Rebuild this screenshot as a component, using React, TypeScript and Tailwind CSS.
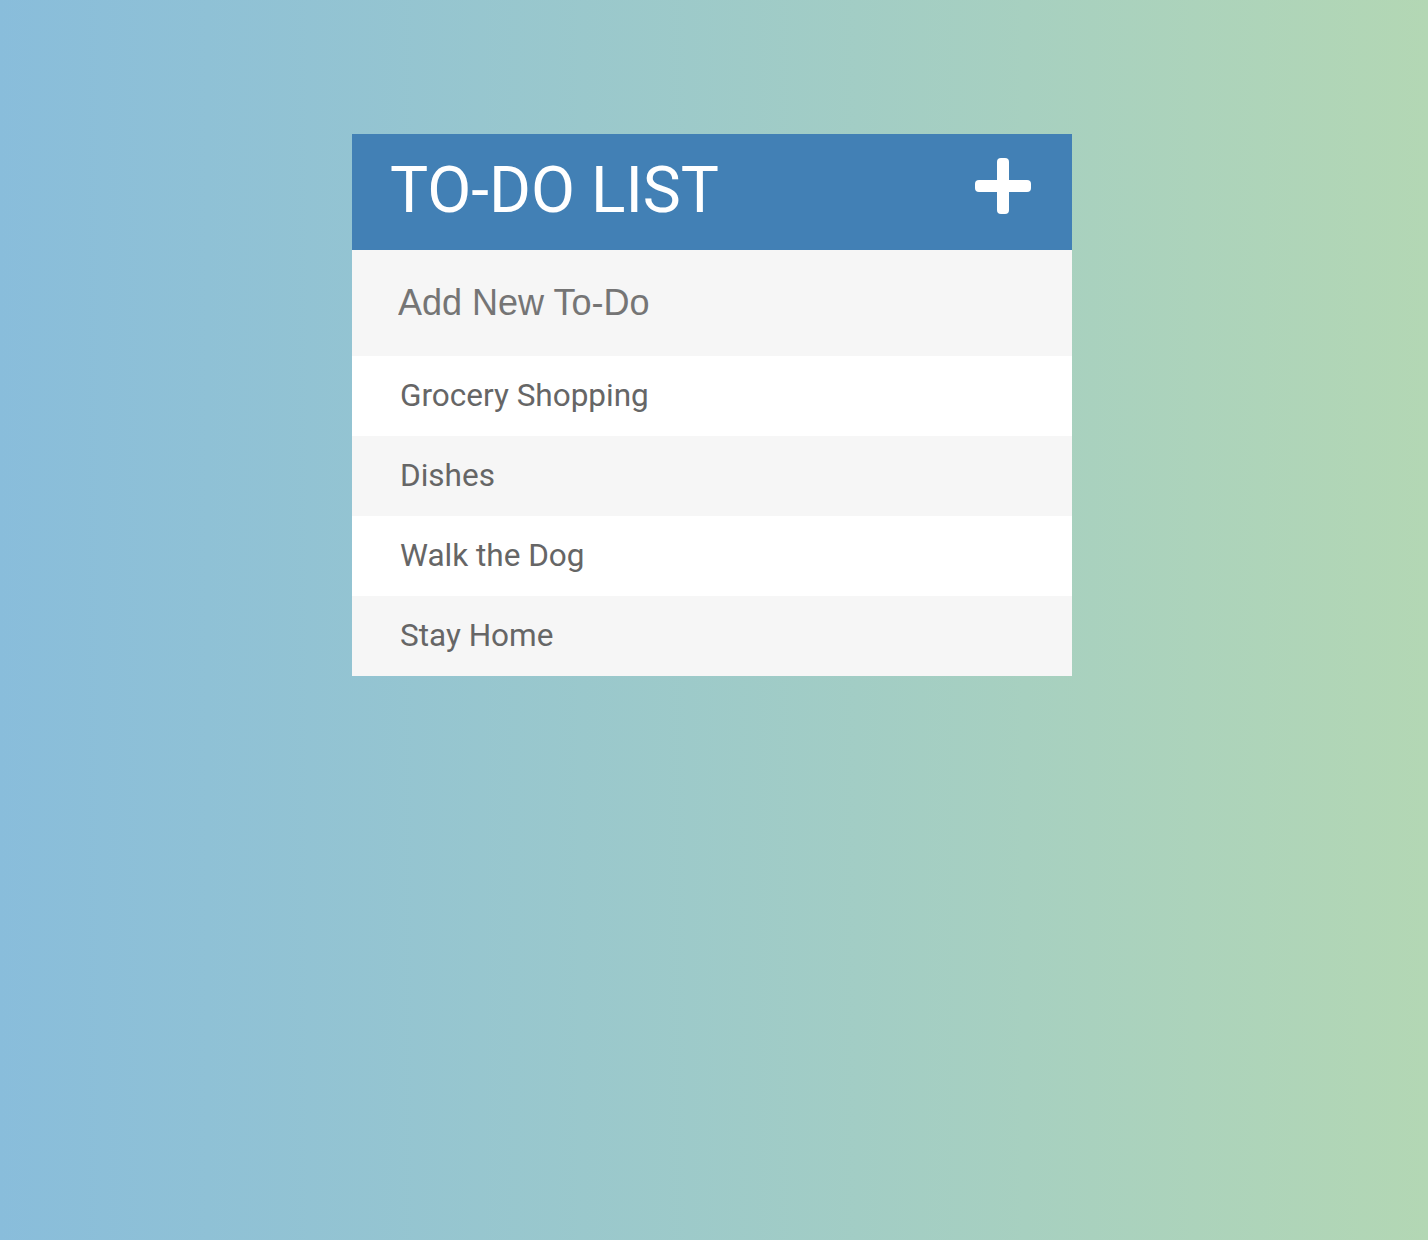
import { useState } from 'react';

const todos = ['Grocery Shopping', 'Dishes', 'Walk the Dog', 'Stay Home'];

function PlusIcon() {
  return (
    <svg width="56" height="56" viewBox="0 0 56 56" fill="#ffffff">
      <rect x="22" y="0" width="12" height="56" rx="4" />
      <rect x="0" y="22" width="56" height="12" rx="4" />
    </svg>
  );
}

export default function App() {
  const [value, setValue] = useState('');

  return (
    <div className="min-h-[1240px] w-full bg-linear-to-r from-[#89bddb] to-[#b3d7b4] pt-[134px] font-['Roboto',sans-serif]">
      <div className="ml-[352px] w-[720px]">
        {/* ヘッダー */}
        <div className="flex h-[116px] items-center justify-between bg-[#4280b5] pl-[38px] pr-[41px]">
          <h1 className="-mt-[3px] text-[64px] font-normal leading-none text-white">TO-DO LIST</h1>
          <button className="-mt-3 flex items-center">
            <PlusIcon />
          </button>
        </div>

        {/* 入力欄 */}
        <div className="flex h-[106px] items-center bg-[#f6f6f6]">
          <input
            value={value}
            onChange={(e) => setValue(e.target.value)}
            placeholder="Add New To-Do"
            className="h-full w-full bg-transparent pl-[46px] font-['Liberation_Sans',Arial,sans-serif] text-[36px] text-[#666] outline-none placeholder:text-[#757575]"
          />
        </div>

        {/* リスト */}
        <ul>
          {todos.map((t, i) => (
            <li
              key={t}
              className={`flex h-20 items-center pl-12 text-[31.5px] text-[#666] ${i % 2 === 0 ? 'bg-white' : 'bg-[#f6f6f6]'}`}
            >
              {t}
            </li>
          ))}
        </ul>
      </div>
    </div>
  );
}
